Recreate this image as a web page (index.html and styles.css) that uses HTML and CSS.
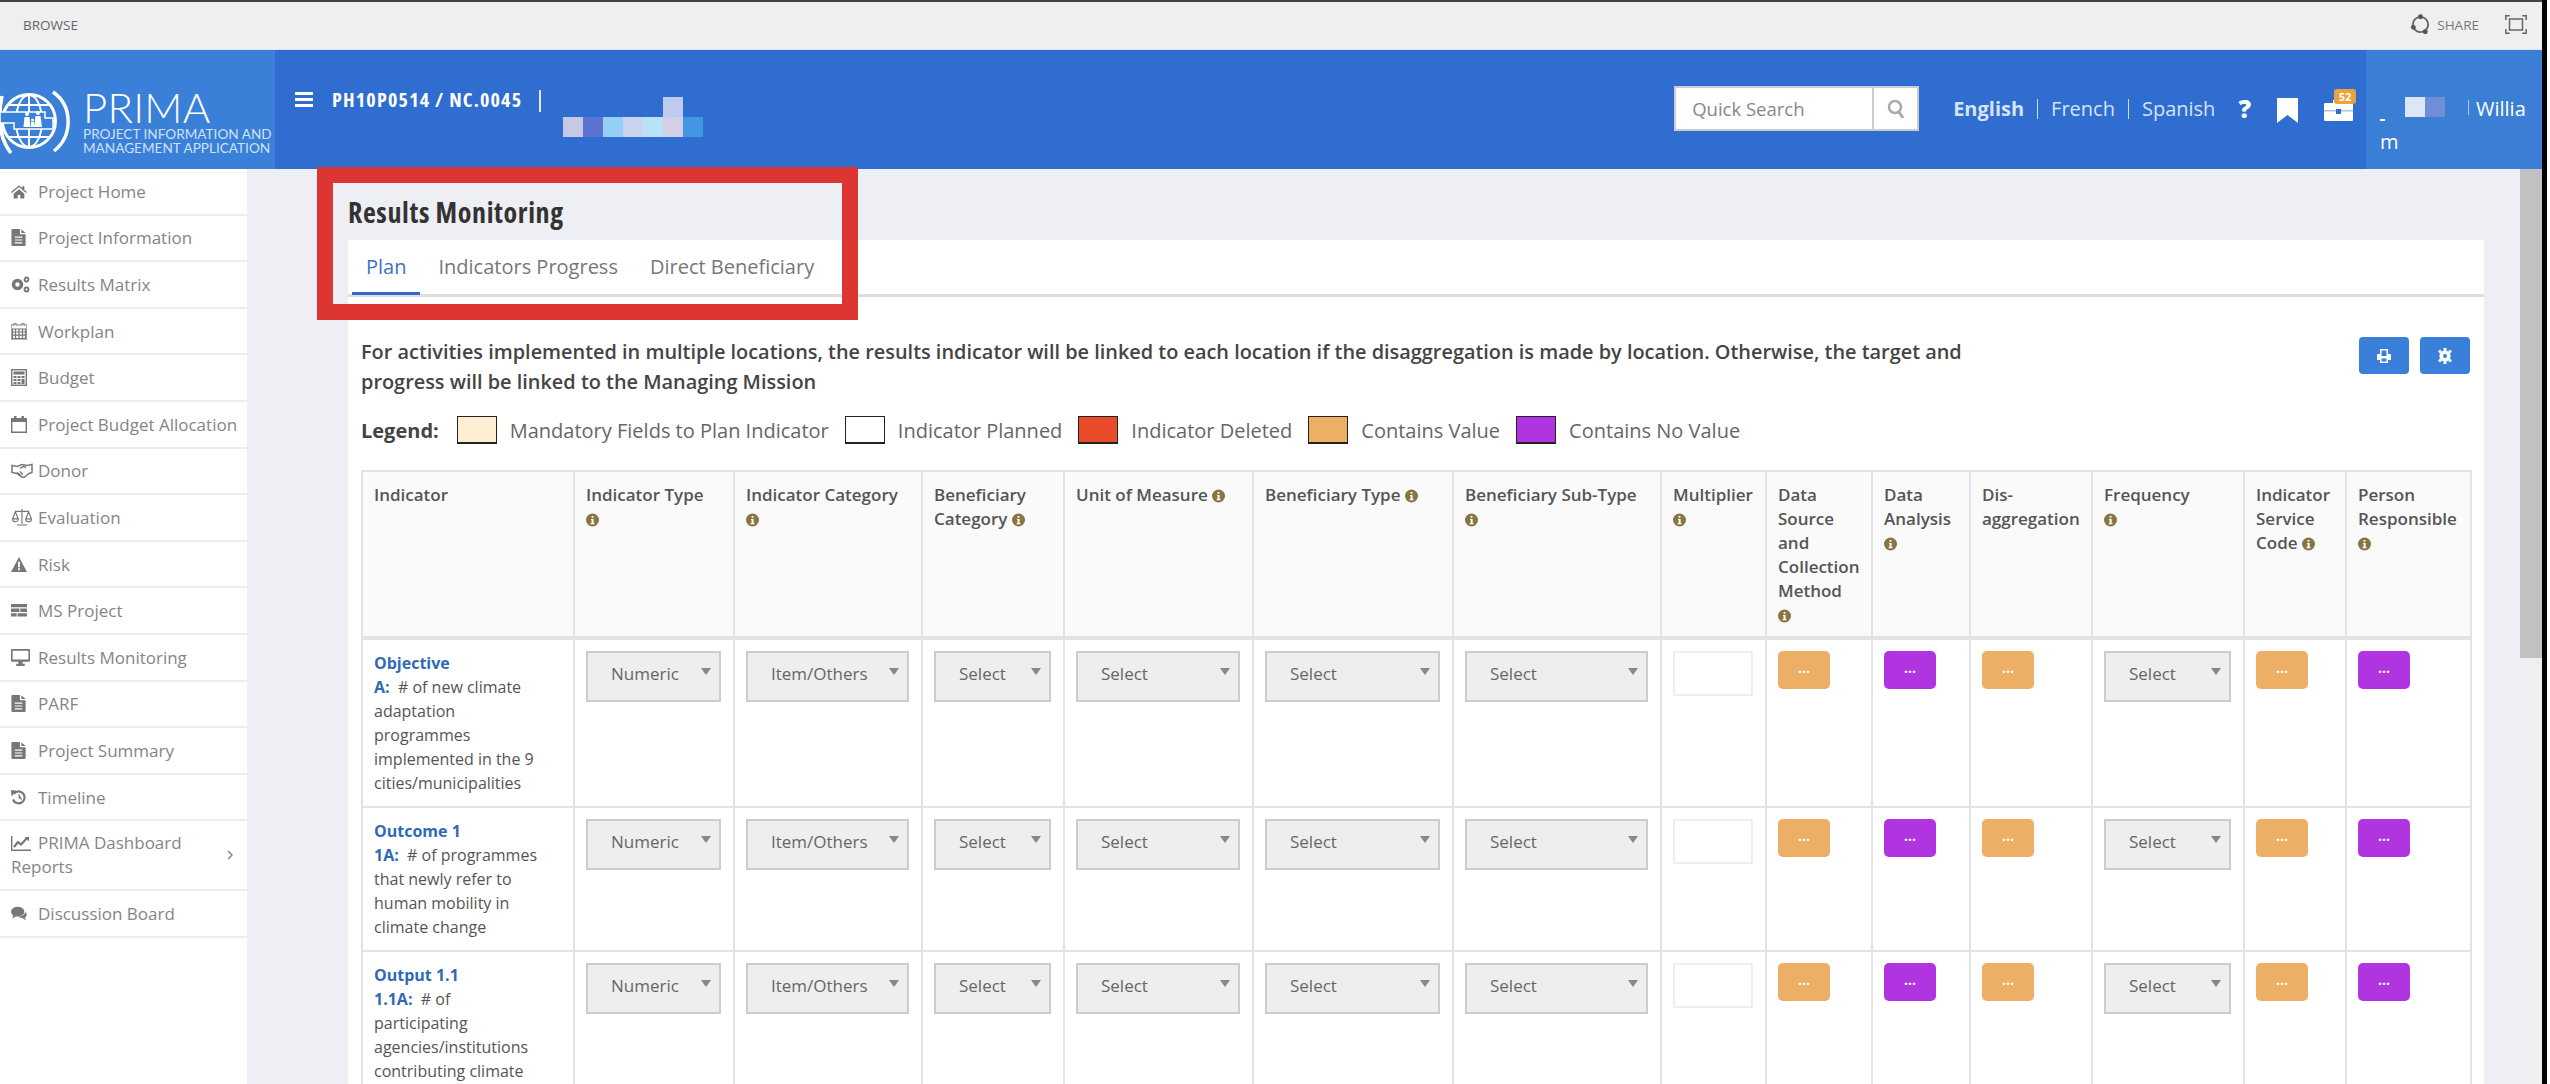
FILE: index.html
```html
<!DOCTYPE html>
<html lang="en">
<head>
  <meta charset="UTF-8">
  <meta name="viewport" content="width=device-width, initial-scale=1.0">
  <title>PRIMA - Results Monitoring</title>
  <link rel="stylesheet" href="styles.css">
</head>
<body>

  <svg class="sprite" xmlns="http://www.w3.org/2000/svg">
    <symbol id="i-info" viewBox="0 0 14 14">
      <circle cx="7" cy="7" r="7" fill="#8a7442"/>
      <path d="M6 2.600h2v2H6zM5.400 5.800h2.800v4.400h.9v1.300H5v-1.300h1V7.100h-.6z" fill="#fff"/>
    </symbol>
    <symbol id="i-file" viewBox="0 0 16 18">
      <path d="M1 0h8v5.500h6V17a1 1 0 0 1-1 1H1a1 1 0 0 1-1-1V1a1 1 0 0 1 1-1zM10.500 .3 15 4.300h-4.500zM3.500 8v1.300h8V8zM3.500 11v1.300h8V11zM3.500 14v1.300h8V14z" fill="currentColor" fill-rule="evenodd"/>
    </symbol>
  </svg>

  <div class="window">
    <!-- Browser strip -->
    <div class="topbar">
      <span class="browse">BROWSE</span>
      <div class="topbar-right">
        <svg class="share-icon" viewBox="0 0 22 22"><circle cx="11" cy="11" r="8" fill="none" stroke="#666" stroke-width="2"/><circle cx="11" cy="2.800" r="2.600" fill="#555"/><circle cx="3.500" cy="14" r="2.600" fill="#555"/><circle cx="16" cy="18.500" r="2.600" fill="#555"/></svg>
        <span class="share">SHARE</span>
        <svg class="full-icon" viewBox="0 0 22 19"><path d="M.8 5V.8h4M17.200.8h4V5M21.200 14v4.200h-4M4.800 18.200h-4V14" fill="none" stroke="#666" stroke-width="1.500"/><rect x="4.500" y="4" width="13" height="11" fill="none" stroke="#666" stroke-width="1.500"/></svg>
      </div>
    </div>

    <!-- Header -->
    <header class="header">
      <div class="logo">
        <svg class="logo-mark" viewBox="0 0 72 64">
          <g fill="none" stroke="#fff">
            <circle cx="29" cy="31" r="26.500" stroke-width="3"/>
            <ellipse cx="29" cy="31" rx="13" ry="26" stroke-width="2"/>
            <path d="M29 4v54M8 15h42M3 31h52M8 47h42" stroke-width="2"/>
            <path d="M53 2c20 14 20 44 1 59" stroke-width="3.500"/>
            <path d="M2 6c-4 20-3 42 9 57" stroke-width="3.500"/>
          </g>
          <path d="M0 22h45v6h8v11H14v-6H0z" fill="#3a80d8" stroke="#fff" stroke-width="1.500"/>
          <g fill="#fff">
            <circle cx="27" cy="24" r="2"/><path d="M24.500 27h5l1 10h-7z"/>
            <circle cx="38" cy="23" r="2"/><path d="M35.500 26h5l1.500 11h-8z"/>
            <circle cx="32.500" cy="30" r="1.500"/><path d="M31 32h3v5h-3z"/>
          </g>
        </svg>
        <div class="logo-text">
          <div class="logo-name">PRIMA</div>
          <div class="logo-sub">PROJECT INFORMATION AND<br>MANAGEMENT APPLICATION</div>
        </div>
      </div>

      <div class="header-main">
        <div class="project">
          <span class="burger"><i></i><i></i><i></i></span>
          <span class="project-code">PH10P0514 / NC.0045</span>
          <span class="project-sep"></span>
          <div class="mosaic">
            <b class="m0"></b><b class="m1"></b><b class="m2"></b><b class="m3"></b><b class="m4"></b><b class="m5"></b><b class="m6"></b>
          </div>
        </div>

        <div class="header-tools">
          <div class="search">
            <span class="search-text">Quick Search</span>
            <span class="search-btn">
              <svg viewBox="0 0 18 20" width="18" height="20"><circle cx="8" cy="8" r="6" fill="none" stroke="#aaa" stroke-width="2.500"/><path d="M12 13l4 6" stroke="#aaa" stroke-width="3"/></svg>
            </span>
          </div>
          <div class="langs">
            <a class="lang-on">English</a><span class="lang-sep"></span><a>French</a><span class="lang-sep"></span><a>Spanish</a>
          </div>
          <span class="help">?</span>
          <svg class="bookmark" viewBox="0 0 21 25"><path d="M0 0h21v25l-10.500-8L0 25z" fill="#fff"/></svg>
          <span class="inbox">
            <svg viewBox="0 0 29 21" width="29" height="21"><path d="M1 3h8V0h11v3h8a1 1 0 0 1 1 1v16a1 1 0 0 1-1 1H1a1 1 0 0 1-1-1V4a1 1 0 0 1 1-1z" fill="#fff"/><path d="M0 10h29v1.500H0z" fill="#a9c3ea"/><rect x="12" y="9" width="5" height="5" fill="#306dd0"/></svg>
            <span class="badge">52</span>
          </span>
        </div>

        <div class="user">
          <div class="user-top">
            <span class="user-dash"></span>
            <b class="u0"></b><b class="u1"></b>
            <span class="user-sep"></span>
            <span class="user-name">Willia</span>
          </div>
          <div class="user-rest">m</div>
        </div>
      </div>
    </header>

    <div class="layout">
      <!-- Side nav -->
      <nav class="side-nav">
        <ul>
          <li><svg class="ic" viewBox="0 0 18 16"><path d="M9 1 0 8.500l1 1.200L9 3l8 6.700 1-1.200-3-2.500V2h-2.500v2zM3 10.500V16h4.500v-4h3v4H15v-5.500L9 5.500z" fill="currentColor"/></svg>Project Home</li>
          <li><svg class="ic"><use href="#i-file"/></svg>Project Information</li>
          <li><svg class="ic ic-cog" viewBox="0 0 19 16"><circle cx="6.500" cy="8" r="4" fill="none" stroke="currentColor" stroke-width="3.500"/><circle cx="15.500" cy="3" r="2" fill="none" stroke="currentColor" stroke-width="1.800"/><circle cx="15.500" cy="13" r="2" fill="none" stroke="currentColor" stroke-width="1.800"/></svg>Results Matrix</li>
          <li><svg class="ic" viewBox="0 0 16 17"><path d="M3 0h2v2h6V0h2v2h3v15H0V2h3zM1.500 6v9.500h13V6zM4.500 6v9.500M8 6v9.500M11.500 6v9.500M1.500 9h13M1.500 12.200h13" fill="none" stroke="currentColor" stroke-width="1.200"/></svg>Workplan</li>
          <li><svg class="ic" viewBox="0 0 16 17"><rect x=".7" y=".7" width="14.600" height="15.600" fill="none" stroke="currentColor" stroke-width="1.400"/><path d="M2.500 2.500h11v3h-11zM2.500 7h3v2h-3zM6.500 7h3v2h-3zM10.500 7h3v2h-3zM2.500 10h3v2h-3zM6.500 10h3v2h-3zM10.500 10h3v5h-3zM2.500 13h3v2h-3zM6.500 13h3v2h-3z" fill="currentColor"/></svg>Budget</li>
          <li><svg class="ic" viewBox="0 0 16 17"><path d="M3 0h2.500v2h5V0H13v2h3v15H0V2h3zM1.400 6v9.600h13.200V6z" fill="currentColor" fill-rule="evenodd"/></svg>Project Budget Allocation</li>
          <li><svg class="ic ic-wide" viewBox="0 0 22 14"><path d="M1 2l5 1 5-2 5 1 5-1v8l-3 1-5 4-3-1-4-3-5-1zM9 5l3-2 3 1M6 9l4 3M9 8l3 3" fill="none" stroke="currentColor" stroke-width="1.500"/></svg>Donor</li>
          <li><svg class="ic ic-wide" viewBox="0 0 21 18"><path d="M10.500 0v16M5 17h11M3 2.500h15M3.500 3 .5 10.500h6zM17.500 3l-3 7.500h6zM.5 10.500a3 3 0 0 0 6 0M14.500 10.500a3 3 0 0 0 6 0" fill="none" stroke="currentColor" stroke-width="1.200"/></svg>Evaluation</li>
          <li><svg class="ic" viewBox="0 0 17 16"><path d="M8.500 0 17 16H0zM7.500 5v6h2V5zM7.500 12v2h2v-2z" fill="currentColor" fill-rule="evenodd"/></svg>Risk</li>
          <li><svg class="ic" viewBox="0 0 17 14"><path d="M0 0h17v3.500H0zM0 5h9v3.500H0zM10 5h7v3.500h-7zM0 10h6v3.500H0zM7 10h10v3.500H7z" fill="currentColor"/></svg>MS Project</li>
          <li><svg class="ic ic-mid" viewBox="0 0 18 16"><path d="M1 0h16a1 1 0 0 1 1 1v10a1 1 0 0 1-1 1h-6v2h2v2H5v-2h2v-2H1a1 1 0 0 1-1-1V1a1 1 0 0 1 1-1zM1.500 1.500v8.500h15V1.500z" fill="currentColor" fill-rule="evenodd"/></svg>Results Monitoring</li>
          <li><svg class="ic"><use href="#i-file"/></svg>PARF</li>
          <li><svg class="ic"><use href="#i-file"/></svg>Project Summary</li>
          <li><svg class="ic" viewBox="0 0 16 16"><path d="M3 4a6 6 0 1 1-1 6" fill="none" stroke="currentColor" stroke-width="2.200"/><path d="M0 1l5 .5L1 6zM8 4.500v4l3 1.500" fill="currentColor" stroke="currentColor" stroke-width=".8"/></svg>Timeline</li>
          <li class="nav-tall">
            <span><svg class="ic ic-line" viewBox="0 0 20 15"><path d="M.7 0v14.300H20" fill="none" stroke="currentColor" stroke-width="1.400"/><path d="M3 11l4-5 3 2.500L16 2" fill="none" stroke="currentColor" stroke-width="2.200"/><path d="M13.500 1H18v4.500z" fill="currentColor"/></svg>PRIMA Dashboard<br>Reports</span>
            <svg class="chev" viewBox="0 0 7 10" width="7" height="10"><path d="M1 1l4 4-4 4" fill="none" stroke="#888" stroke-width="1.500"/></svg>
          </li>
          <li><svg class="ic" viewBox="0 0 18 15"><ellipse cx="7.500" cy="5.500" rx="7.500" ry="5.500" fill="currentColor"/><path d="M3 9 1 13l5-2.500z" fill="currentColor"/><path d="M16 5.500c2.500 2.500 2 5.500-.5 6.500l1.500 3-4.500-2.500c-2 0-3.500-.5-4.500-1.500 4 0 8-2 8-5.500z" fill="currentColor"/></svg>Discussion Board</li>
        </ul>
      </nav>

      <!-- Content -->
      <main class="main">
        <h1 class="page-title">Results Monitoring</h1>
        <div class="tabs">
          <a class="tab tab-active">Plan</a>
          <a class="tab">Indicators Progress</a>
          <a class="tab">Direct Beneficiary</a>
        </div>

        <div class="panel">
          <div class="notice-row">
            <p class="notice">For activities implemented in multiple locations, the results indicator will be linked to each location if the disaggregation is made by location. Otherwise, the target and<br>progress will be linked to the Managing Mission</p>
            <div class="notice-btns">
              <button class="btn-blue"><svg viewBox="0 0 16 16" width="16" height="16"><path d="M4 1h8v5h2a1 1 0 0 1 1 1v5h-3v3H4v-3H1V7a1 1 0 0 1 1-1h2zM5.500 2.500V8h5V2.500zM5.500 10.500v3h5v-3z" fill="#fff" fill-rule="evenodd"/></svg></button>
              <button class="btn-blue"><svg viewBox="0 0 16 16" width="16" height="16"><circle cx="8" cy="8" r="3.800" fill="none" stroke="#fff" stroke-width="3.600"/><path d="M6.500 0h3v3h-3zM6.500 13h3v3h-3zM1 3.500 3 1.500 5 3.500 3 5.500zM11 12.500l2-2 2 2-2 2zM1 12.500l2-2 2 2-2 2zM11 3.500l2-2 2 2-2 2z" fill="#fff"/></svg></button>
            </div>
          </div>

          <div class="legend">
            <strong class="legend-title">Legend:</strong>
            <span class="swatch sw-cream"></span><span class="legend-text">Mandatory Fields to Plan Indicator</span>
            <span class="swatch sw-white"></span><span class="legend-text">Indicator Planned</span>
            <span class="swatch sw-red"></span><span class="legend-text">Indicator Deleted</span>
            <span class="swatch sw-orange"></span><span class="legend-text">Contains Value</span>
            <span class="swatch sw-purple"></span><span class="legend-text">Contains No Value</span>
          </div>

          <table class="plan-table">
            <colgroup>
              <col class="c1"><col class="c2"><col class="c3"><col class="c4"><col class="c5"><col class="c6"><col class="c7"><col class="c8"><col class="c9"><col class="c10"><col class="c11"><col class="c12"><col class="c13"><col class="c14">
            </colgroup>
            <thead>
              <tr>
                <th>Indicator</th>
                <th>Indicator Type<br><svg class="info"><use href="#i-info"/></svg></th>
                <th>Indicator Category<br><svg class="info"><use href="#i-info"/></svg></th>
                <th>Beneficiary<br>Category <svg class="info"><use href="#i-info"/></svg></th>
                <th>Unit of Measure <svg class="info"><use href="#i-info"/></svg></th>
                <th>Beneficiary Type <svg class="info"><use href="#i-info"/></svg></th>
                <th>Beneficiary Sub-Type<br><svg class="info"><use href="#i-info"/></svg></th>
                <th>Multiplier<br><svg class="info"><use href="#i-info"/></svg></th>
                <th>Data<br>Source<br>and<br>Collection<br>Method<br><svg class="info"><use href="#i-info"/></svg></th>
                <th>Data<br>Analysis<br><svg class="info"><use href="#i-info"/></svg></th>
                <th>Dis-<br>aggregation</th>
                <th>Frequency<br><svg class="info"><use href="#i-info"/></svg></th>
                <th>Indicator<br>Service<br>Code <svg class="info"><use href="#i-info"/></svg></th>
                <th>Person<br>Responsible<br><svg class="info"><use href="#i-info"/></svg></th>
              </tr>
            </thead>
            <tbody>
              <tr>
                <td><a class="ind-head">Objective</a><br><a class="ind-code">A:</a>&nbsp;&nbsp;# of new climate<br>adaptation<br>programmes<br>implemented in the 9<br>cities/municipalities</td>
                <td><div class="sel">Numeric</div></td>
                <td><div class="sel">Item/Others</div></td>
                <td><div class="sel">Select</div></td>
                <td><div class="sel">Select</div></td>
                <td><div class="sel">Select</div></td>
                <td><div class="sel">Select</div></td>
                <td><div class="num-input"></div></td>
                <td><button class="dots dots-orange">...</button></td>
                <td><button class="dots dots-purple">...</button></td>
                <td><button class="dots dots-orange">...</button></td>
                <td><div class="sel">Select</div></td>
                <td><button class="dots dots-orange">...</button></td>
                <td><button class="dots dots-purple">...</button></td>
              </tr>
              <tr>
                <td><a class="ind-head">Outcome 1</a><br><a class="ind-code">1A:</a>&nbsp;&nbsp;# of programmes<br>that newly refer to<br>human mobility in<br>climate change</td>
                <td><div class="sel">Numeric</div></td>
                <td><div class="sel">Item/Others</div></td>
                <td><div class="sel">Select</div></td>
                <td><div class="sel">Select</div></td>
                <td><div class="sel">Select</div></td>
                <td><div class="sel">Select</div></td>
                <td><div class="num-input"></div></td>
                <td><button class="dots dots-orange">...</button></td>
                <td><button class="dots dots-purple">...</button></td>
                <td><button class="dots dots-orange">...</button></td>
                <td><div class="sel">Select</div></td>
                <td><button class="dots dots-orange">...</button></td>
                <td><button class="dots dots-purple">...</button></td>
              </tr>
              <tr>
                <td><a class="ind-head">Output 1.1</a><br><a class="ind-code">1.1A:</a>&nbsp;&nbsp;# of<br>participating<br>agencies/institutions<br>contributing climate</td>
                <td><div class="sel">Numeric</div></td>
                <td><div class="sel">Item/Others</div></td>
                <td><div class="sel">Select</div></td>
                <td><div class="sel">Select</div></td>
                <td><div class="sel">Select</div></td>
                <td><div class="sel">Select</div></td>
                <td><div class="num-input"></div></td>
                <td><button class="dots dots-orange">...</button></td>
                <td><button class="dots dots-purple">...</button></td>
                <td><button class="dots dots-orange">...</button></td>
                <td><div class="sel">Select</div></td>
                <td><button class="dots dots-orange">...</button></td>
                <td><button class="dots dots-purple">...</button></td>
              </tr>
            </tbody>
          </table>
        </div>
      </main>

      <div class="scroll-track"><div class="scroll-thumb"></div></div>
    </div>

    <!-- Red annotation box drawn over the page -->
    <div class="callout"></div>
  </div>

</body>
</html>
```

FILE: styles.css
```css
* {
  box-sizing: border-box;
}

html, body {
  margin: 0;
  height: 100%;
  overflow: hidden;
  background: #fff;
}

body {
  font-family: "Open Sans", Arial, sans-serif;
  font-size: 15px;
  color: #555;
}

.sprite {
  display: none;
}

.window {
  position: relative;
  width: 2547px;
  height: 1084px;
  border-right: 5px solid #000;
  display: flex;
  flex-direction: column;
  overflow: hidden;
}

/* Browser strip */
.topbar {
  height: 50px;
  flex: none;
  background: #efeff1;
  border-top: 2px solid #444;
  border-bottom: 1px solid #dfe4ee;
  display: flex;
  align-items: center;
  justify-content: space-between;
  padding: 0 15px 2px 23px;
}

.browse {
  font-size: 13.500px;
  color: #666;
}

.topbar-right {
  display: flex;
  align-items: center;
}

.share-icon {
  width: 21px;
  height: 21px;
  margin-right: 6px;
}

.share {
  font-size: 13.500px;
  color: #777;
  margin-right: 26px;
}

.full-icon {
  width: 22px;
  height: 19px;
}

/* Header */
.header {
  height: 119px;
  flex: none;
  display: flex;
  background: #306dd0;
  color: #fff;
}

.logo {
  width: 275px;
  flex: none;
  background: #3a80d8;
  display: flex;
  align-items: flex-start;
  padding-top: 40px;
}

.logo-mark {
  width: 72px;
  height: 64px;
  flex: none;
}

.logo-text {
  margin-left: 11px;
  font-family: Lato, "Open Sans", sans-serif;
}

.logo-name {
  font-size: 42px;
  font-weight: 300;
  line-height: 34px;
  letter-spacing: .2px;
}

.logo-sub {
  font-size: 13.600px;
  line-height: 14px;
  margin-top: 3px;
  color: #cfe0f6;
  white-space: nowrap;
}

.header-main {
  flex: 1;
  display: flex;
  align-items: flex-start;
}

.project {
  flex: 1;
  display: flex;
  align-items: flex-start;
  padding: 36px 0 0 20px;
}

.burger {
  display: flex;
  flex-direction: column;
  gap: 3px;
  margin-top: 6px;
  width: 18px;
}

.burger i {
  display: block;
  height: 3px;
  background: #fff;
}

.project-code {
  margin-left: 19px;
  font-size: 20px;
  font-weight: 700;
  font-stretch: 87%;
  letter-spacing: 1.200px;
  line-height: 28px;
}

.project-sep {
  width: 2px;
  height: 22px;
  background: #dfe8f8;
  margin: 4px 0 0 17px;
}

.mosaic {
  display: grid;
  grid-template-columns: repeat(7, 20px);
  grid-template-rows: 20px 20px;
  margin: 11px 0 0 22px;
}

.m0 { grid-column: 6; grid-row: 1; background: #bfcbee; }

.mosaic b:nth-child(n+2) { grid-row: 2; }

.m1 { background: #c7c7e6; }
.m2 { background: #5b74d4; }
.m3 { background: #94d0f5; }
.m4 { background: #c9d4ee; }
.m5 { background: #b8e2f8; }
.m6 { background: #d2cfe6; }

.mosaic::after {
  content: "";
  grid-row: 2;
  background: #4298e0;
}

.header-tools {
  display: flex;
  align-items: flex-start;
  padding-top: 36px;
}

.search {
  width: 245px;
  height: 45px;
  background: #fff;
  border: 2px solid #ccc;
  display: flex;
  align-items: center;
  margin-right: 34px;
}

.search-text {
  flex: 1;
  padding-left: 16px;
  font-size: 18.500px;
  color: #888;
}

.search-btn {
  width: 45px;
  height: 100%;
  border-left: 2px solid #ccc;
  display: flex;
  align-items: center;
  justify-content: center;
}

.langs {
  display: flex;
  align-items: center;
  height: 45px;
  font-size: 20px;
  color: #d5e3f7;
}

.lang-on {
  font-weight: 700;
}

.lang-sep {
  width: 1px;
  height: 20px;
  background: #cfdef5;
  margin: 0 13px;
}

.help {
  font-size: 25px;
  font-weight: 800;
  line-height: 45px;
  margin-left: 23px;
}

.bookmark {
  width: 21px;
  height: 25px;
  margin: 12px 0 0 26px;
}

.inbox {
  position: relative;
  margin: 14px 13px 0 26px;
  display: block;
  height: 21px;
}

.badge {
  position: absolute;
  top: -11px;
  left: 10px;
  width: 22px;
  height: 15px;
  border-radius: 3px;
  background: #e8a33d;
  color: #fff;
  font-size: 11px;
  font-weight: 700;
  line-height: 15px;
  text-align: center;
}

.user {
  width: 176px;
  height: 119px;
  flex: none;
  background: #3a7ed6;
  padding: 47px 0 0 14px;
  font-size: 20px;
}

.user-top {
  display: flex;
  align-items: flex-start;
  height: 31px;
  position: relative;
}

.user-dash {
  width: 5px;
  height: 2px;
  background: #fff;
  margin-top: 22px;
}

.user-top b {
  display: block;
  width: 20px;
  height: 20px;
}

.u0 { background: #dbe7f5; margin-left: 20px; }
.u1 { background: #6f8ed8; }

.user-sep {
  width: 1px;
  height: 15px;
  background: #a9c6ee;
  margin: 3px 0 0 23px;
}

.user-name {
  margin: -2px 0 0 7px;
  line-height: 28px;
}

.user-rest {
  line-height: 28px;
}

/* Body layout */
.layout {
  flex: 1;
  min-height: 0;
  display: flex;
  background: #eeeff5;
}

.side-nav {
  width: 247px;
  flex: none;
  background: #fff;
  color: #858585;
  font-size: 17px;
}

.side-nav ul {
  list-style: none;
  margin: 0;
  padding: 0;
}

.side-nav li {
  height: 46.600px;
  display: flex;
  align-items: center;
  justify-content: flex-start;
  padding-left: 11px;
  border-bottom: 2px solid #eee;
  white-space: nowrap;
  background: #fff;
}

.side-nav li.nav-tall {
  height: 70px;
  line-height: 24px;
  justify-content: space-between;
  padding-right: 13px;
}

.ic {
  width: 16px;
  height: 17px;
  margin-right: 11px;
  flex: none;
  color: #777;
}

.ic-cog {
  width: 19px;
  margin-right: 8px;
}

.ic-wide {
  width: 22px;
  margin-right: 5px;
}

.ic-mid {
  width: 19px;
  margin-right: 8px;
}

.ic-line {
  width: 20px;
  height: 15px;
  margin-right: 7px;
  vertical-align: -2px;
}

/* Main column */
.main {
  flex: 1;
  min-width: 0;
  padding: 0 36px 0 101px;
  overflow: hidden;
}

.page-title {
  height: 71px;
  margin: 0;
  font-size: 28px;
  font-weight: 700;
  font-stretch: 80%;
  letter-spacing: .6px;
  line-height: 86px;
  color: #333;
}

.tabs {
  height: 57px;
  background: #fff;
  border-bottom: 3px solid #ddd;
  display: flex;
  padding-left: 4px;
  font-size: 20px;
  color: #777;
}

.tab {
  padding: 0 14px;
  margin-right: 4px;
  line-height: 53px;
  height: 55px;
}

.tab-active {
  color: #3a72c8;
  border-bottom: 3px solid #2f6ac8;
}

.panel {
  background: #fff;
  padding: 0 14px 0 13px;
}

.notice-row {
  display: flex;
  justify-content: space-between;
  padding-top: 40px;
}

.notice {
  margin: 0;
  font-size: 19.900px;
  font-weight: 600;
  line-height: 30px;
  color: #444;
}

.notice-btns {
  display: flex;
  gap: 11px;
}

.btn-blue {
  width: 50px;
  height: 37px;
  border: 0;
  border-radius: 4px;
  background: #3a7fd9;
  display: flex;
  align-items: center;
  justify-content: center;
  padding: 0;
}

.legend {
  display: flex;
  align-items: center;
  margin-top: 19px;
  height: 28px;
  font-size: 20px;
  color: #666;
}

.legend-title {
  font-weight: 700;
  color: #444;
  margin-right: 18px;
}

.swatch {
  width: 40px;
  height: 28px;
  border: 1px solid #222;
  border-bottom-width: 2px;
  margin-right: 13px;
}

.legend-text {
  margin-right: 16px;
}

.sw-cream { background: #fcedd3; }
.sw-white { background: #fff; }
.sw-red { background: #e94b2b; }
.sw-orange { background: #edae65; }
.sw-purple { background: #b035e0; }

/* Plan table */
.plan-table {
  margin-top: 26px;
  width: 2109px;
  table-layout: fixed;
  border-collapse: collapse;
  font-size: 16px;
  line-height: 24px;
}

.c1 { width: 212px; }
.c2 { width: 160px; }
.c3 { width: 188px; }
.c4 { width: 142px; }
.c5 { width: 189px; }
.c6 { width: 200px; }
.c7 { width: 208px; }
.c8 { width: 105px; }
.c9 { width: 106px; }
.c10 { width: 98px; }
.c11 { width: 122px; }
.c12 { width: 152px; }
.c13 { width: 102px; }
.c14 { width: 125px; }

.plan-table th,
.plan-table td {
  border: 2px solid #e3e3e3;
  padding: 11px 12px 11px 11px;
  vertical-align: top;
  text-align: left;
}

.plan-table th {
  background: #fafafa;
  border-bottom-width: 4px;
  font-size: 17px;
  font-weight: 600;
  color: #555;
  height: 167px;
  padding-bottom: 9px;
}

.plan-table td {
  color: #555;
}

.info {
  width: 13px;
  height: 14px;
  vertical-align: -2px;
}

.ind-head,
.ind-code {
  color: #2f6ab5;
  font-weight: 700;
}

.sel {
  position: relative;
  height: 51px;
  width: 100%;
  background: #eee;
  border: 2px solid #ccc;
  padding-left: 23px;
  font-size: 17px;
  line-height: 42px;
  color: #666;
}

.sel::after {
  content: "";
  position: absolute;
  top: 15px;
  right: 8px;
  border-left: 5px solid transparent;
  border-right: 5px solid transparent;
  border-top: 7px solid #888;
}

.num-input {
  height: 45px;
  width: 100%;
  background: #fff;
  border: 2px solid #eee;
}

.dots {
  display: block;
  width: 52px;
  height: 38px;
  border: 0;
  border-radius: 5px;
  padding: 0 0 6px;
  color: #fff;
  font-family: inherit;
  font-size: 14px;
  font-weight: 700;
  letter-spacing: 0;
}

.dots-orange { background: #edae65; }
.dots-purple { background: #b035e0; }

.scroll-track {
  width: 22px;
  flex: none;
  background: #efeff1;
}

.scroll-thumb {
  height: 489px;
  background: #c1c1c1;
}

/* Red annotation */
.callout {
  position: absolute;
  left: 317px;
  top: 167px;
  width: 541px;
  height: 153px;
  border: 16px solid #dc3532;
}
```
